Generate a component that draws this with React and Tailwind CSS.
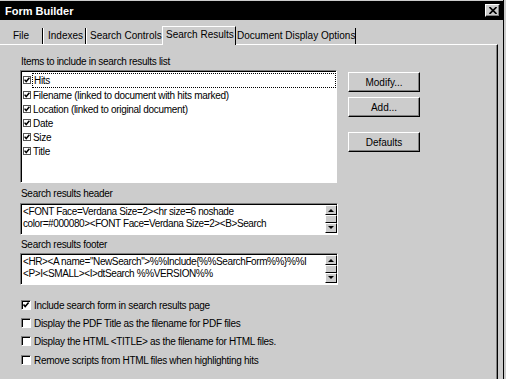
import React from "react";

function Btn({ children, className }) {
  return (
    <div
      className={
        "flex items-center justify-center w-[72px] h-[20px] border border-t-white border-l-white border-b-black border-r-black shadow-[inset_-1px_-1px_0_#808080] " +
        (className || "")
      }
    >
      {children}
    </div>
  );
}

function ListCheck() {
  return (
    <svg width="8" height="8" viewBox="0 0 8 8" className="shrink-0">
      <rect x="0.5" y="0.5" width="7" height="7" fill="#ffffff" stroke="#555555" />
      <path d="M1.6 3.6 L3.2 5.6 L6.4 1.8" fill="none" stroke="#000000" strokeWidth="1.5" />
    </svg>
  );
}

function Check({ checked }) {
  return (
    <div className="w-[10px] h-[10px] shrink-0 bg-white border border-t-[#808080] border-l-[#808080] border-b-white border-r-white shadow-[inset_1px_1px_0_#000000] flex items-center justify-center">
      {checked && (
        <svg width="8" height="8" viewBox="0 0 8 8">
          <path d="M1.5 3.5 L3.2 5.6 L6.6 1.6" fill="none" stroke="#000000" strokeWidth="1.6" />
        </svg>
      )}
    </div>
  );
}

function ScrollBtn({ up }) {
  return (
    <div className="w-[12px] h-[10px] border border-t-white border-l-white border-b-black border-r-black bg-[#cccccc] flex items-center justify-center">
      <svg width="6" height="4" viewBox="0 0 6 4">
        {up ? <path d="M0 4 L3 1 L6 4 Z" fill="#000" /> : <path d="M0 0 L3 3 L6 0 Z" fill="#000" />}
      </svg>
    </div>
  );
}

function TextBox({ lines }) {
  return (
    <div className="w-[318px] h-[32px] bg-white border border-t-[#808080] border-l-[#808080] border-b-white border-r-white shadow-[inset_1px_1px_0_#000000] flex">
      <div className="flex-1 min-w-0 pl-[2px] pt-[2px] overflow-hidden whitespace-nowrap leading-[12px] tracking-[-0.4px]">
        {lines.map((l, i) => (
          <div key={i}>{l}</div>
        ))}
      </div>
      <div className="w-[12px] mt-[1px] flex flex-col">
        <ScrollBtn up />
        <div className="w-[12px] h-[8px] border border-t-white border-l-white border-b-black border-r-black bg-[#cccccc]" />
        <ScrollBtn />
      </div>
    </div>
  );
}

export default function App() {
  const items = [
    "Hits",
    "Filename (linked to document with hits marked)",
    "Location (linked to original document)",
    "Date",
    "Size",
    "Title",
  ];
  const opts = [
    ["Include search form in search results page", true],
    ["Display the PDF Title as the filename for PDF files", false],
    ["Display the HTML <TITLE> as the filename for HTML files.", false],
    ["Remove scripts from HTML files when highlighting hits", false],
  ];
  return (
    <div className="w-[506px] h-[379px] bg-[#cccccc] overflow-hidden flex text-black text-[10px] font-['Liberation_Sans',Arial,sans-serif]">
      <div className="w-[503px] flex flex-col">
        <div className="h-[1px]" />
        <div className="h-[19px] bg-black flex items-center justify-between pl-[5px] pr-[3px]">
          <span className="text-white font-bold text-[11px] leading-[14px]">Form Builder</span>
          <div className="w-[15px] h-[13px] bg-[#cccccc] border border-t-white border-l-white border-b-black border-r-black shadow-[inset_-1px_-1px_0_#808080] flex items-center justify-center">
            <svg width="8" height="7" viewBox="0 0 8 7">
              <path d="M0.5 0 L7.5 7 M7.5 0 L0.5 7" stroke="#000" strokeWidth="1.6" />
            </svg>
          </div>
        </div>
        <div className="flex items-end h-[24px] whitespace-nowrap">
          <div className="w-[43px] h-[16px] border-r border-r-black pl-[13px] leading-[15px]">File</div>
          <div className="w-[43px] h-[16px] border-l border-l-white border-r border-r-black pl-[4px] leading-[15px]">Indexes</div>
          <div className="w-[76px] h-[16px] border-l border-l-white pl-[3px] leading-[15px]">Search Controls</div>
          <div className="relative z-10 -mb-[1px] w-[74px] h-[19px] bg-[#cccccc] border-t border-t-white border-l border-l-white border-r border-r-black pl-[3px] leading-[16px]">Search Results</div>
          <div className="w-[120px] h-[16px] border-r border-r-black pl-[1px] leading-[15px]">Document Display Options</div>
        </div>
        <div className="w-[498px] flex-1 border-t border-t-white border-r border-r-black shadow-[inset_-1px_0_0_#808080] pl-[20px] tracking-[-0.3px]">
          <div className="mt-[10px] h-[13px] leading-[13px] pl-[1px]">Items to include in search results list</div>
          <div className="flex mt-[2px]">
            <div className="w-[317px] h-[113px] bg-white border border-t-[#808080] border-l-[#808080] border-b-white border-r-white shadow-[inset_1px_1px_0_#000000] pt-[1px]">
              {items.map((t, i) => (
                <div key={t} className={"flex items-center pl-[2px] " + (i === 0 ? "h-[16px]" : "h-[14px]")}>
                  <ListCheck />
                  <div
                    className={
                      "ml-[1px] flex-1 pl-[1px] leading-[13px] " +
                      (i === 0 ? "border border-dotted border-black h-[15px]" : "")
                    }
                  >
                    {t}
                  </div>
                </div>
              ))}
            </div>
            <div className="ml-[11px] pt-[2px] flex flex-col tracking-normal">
              <Btn>Modify...</Btn>
              <Btn className="mt-[5px]">Add...</Btn>
              <Btn className="mt-[15px]">Defaults</Btn>
            </div>
          </div>
          <div className="mt-[4px] h-[13px] leading-[13px] pl-[1px]">Search results header</div>
          <div className="mt-[3px]">
            <TextBox
              lines={[
                "<FONT Face=Verdana Size=2><hr size=6 noshade",
                "color=#000080><FONT Face=Verdana Size=2><B>Search",
              ]}
            />
          </div>
          <div className="mt-[3px] h-[13px] leading-[13px] pl-[1px]">Search results footer</div>
          <div className="mt-[2px]">
            <TextBox
              lines={[
                '<HR><A name="NewSearch">%%Include{%%SearchForm%%}%%I',
                "<P>I<SMALL><I>dtSearch %%VERSION%%",
              ]}
            />
          </div>
          <div className="mt-[11px] flex flex-col">
            {opts.map(([t, c], i) => (
              <div key={t} className={"flex items-center h-[18px] ml-[1px] " + (i === 3 ? "mt-[1px]" : "")}>
                <Check checked={c} />
                <span className="ml-[3px] leading-[13px]">{t}</span>
              </div>
            ))}
          </div>
        </div>
      </div>
      <div className="w-[1px] bg-black" />
    </div>
  );
}
